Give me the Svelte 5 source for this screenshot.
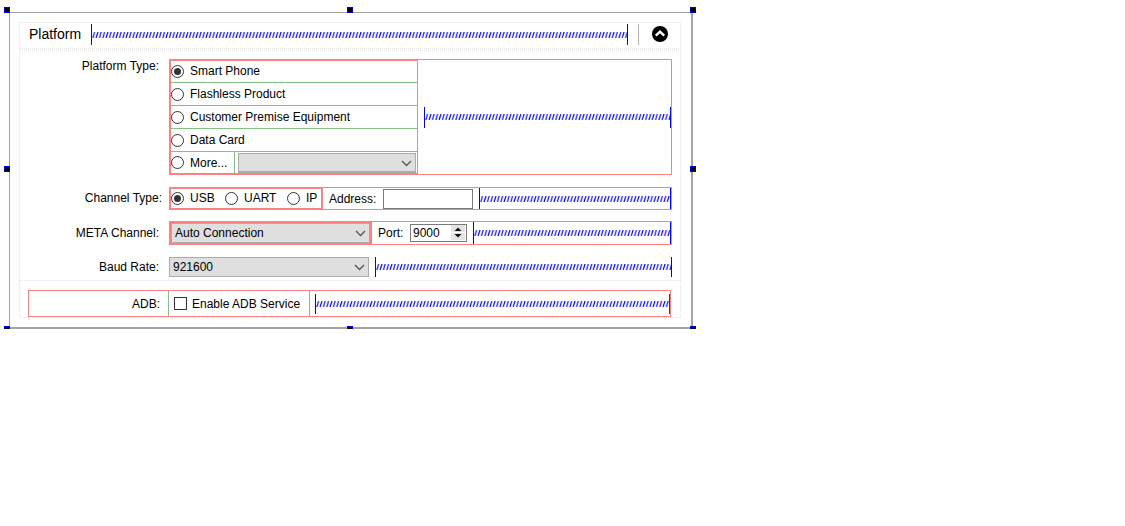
<script>
  const platforms = ['Flashless Product', 'Customer Premise Equipment', 'Data Card'];
  const handles = ['tl', 'tc', 'tr', 'ml', 'mr', 'bl', 'bc', 'br'];
</script>

{#snippet spacer(cls = '')}
  <div class="spacer {cls}">
    <svg class="zig" height="6" width="100%">
      <defs>
        <pattern id="zig-{cls}" width="3.33" height="6" patternUnits="userSpaceOnUse">
          <path d="M.8 6L2.6 0" stroke="#0000ff" stroke-width="1.15" fill="none"/>
        </pattern>
      </defs>
      <rect width="100%" height="6" fill="url(#zig-{cls})"/>
    </svg>
  </div>
{/snippet}

{#snippet radio(on = false)}
  <span class="radio" class:on></span>
{/snippet}

{#snippet chevron()}
  <svg class="chev" width="11" height="7" viewBox="0 0 11 7"><path d="M1 1l4.5 4.5L10 1" fill="none" stroke="#555" stroke-width="1.3"/></svg>
{/snippet}

<div class="form">
  {#each handles as h}<span class="handle {h}"></span>{/each}

  <div class="head">
    <span class="title">Platform</span>
    {@render spacer('head-sp')}
    <span class="vline"></span>
    <span class="toggle">
      <svg width="16" height="16" viewBox="0 0 16 16"><circle cx="8" cy="8" r="8" fill="#000"/><path d="M3.8 9.6L8 5.6l4.2 4" fill="none" stroke="#fff" stroke-width="2.4"/></svg>
    </span>
  </div>

  <div class="body">
    <div class="row r-type">
      <div class="label top">Platform Type:</div>
      <div class="types">
        <div class="opt first">{@render radio(true)}Smart Phone</div>
        {#each platforms as p}
          <div class="opt">{@render radio()}{p}</div>
        {/each}
        <div class="opt last">
          <div class="more">{@render radio()}More...</div>
          <div class="combo more-combo">{@render chevron()}</div>
        </div>
      </div>
      <div class="type-rest">{@render spacer('type-sp')}</div>
    </div>

    <div class="row r-chan">
      <div class="label">Channel Type:</div>
      <div class="chan">
        <span class="ch c1">{@render radio(true)}USB</span>
        <span class="ch c2">{@render radio()}UART</span>
        <span class="ch c3">{@render radio()}IP</span>
      </div>
      <div class="rest">
        <span class="addr">Address:</span>
        <span class="input"></span>
        {@render spacer('chan-sp')}
      </div>
    </div>

    <div class="row r-meta">
      <div class="label">META Channel:</div>
      <div class="meta">
        <div class="combo meta-combo">Auto Connection{@render chevron()}</div>
      </div>
      <div class="rest">
        <span class="port">Port:</span>
        <span class="spin">9000
          <span class="arrows">
            <svg width="14" height="15" viewBox="0 0 14 15"><rect width="14" height="15" fill="#e4e4e4"/><path d="M0 7.500h14" stroke="#fff"/><path d="M3.500 6L7 2.500 10.500 6zM3.500 9h7L7 12.500z" fill="#111"/></svg>
          </span>
        </span>
        {@render spacer('meta-sp')}
      </div>
    </div>

    <div class="row r-baud">
      <div class="label">Baud Rate:</div>
      <div class="combo baud-combo">921600{@render chevron()}</div>
      {@render spacer('baud-sp')}
    </div>
  </div>

  <div class="adbwrap">
    <div class="adb">
      <div class="adb-label">ADB:</div>
      <div class="adb-check"><span class="check"></span>Enable ADB Service</div>
      {@render spacer('adb-sp')}
    </div>
  </div>
</div>

<style>
  :global(body) {
    margin: 0;
    background: #fff;
  }

  .form {
    position: relative;
    box-sizing: border-box;
    width: 684px;
    height: 317px;
    margin: 12px 0 0 9px;
    padding: 9px 10px 0 9px;
    border-style: solid;
    border-color: #a4a4a4;
    border-width: 1px 2px 2px 1px;
    font: 12px/14px "Liberation Sans", Arial, sans-serif;
    color: #000;
  }

  .handle {
    position: absolute;
    box-sizing: border-box;
    width: 6px;
    height: 6px;
    background: #000;
    border: 1px solid #0000c8;
  }
  .tl, .tc, .tr { top: -6px; }
  .ml, .mr { top: 153px; }
  .bl, .bc, .br { top: 313px; }
  .tl, .ml, .bl { left: -6px; }
  .tc, .bc { left: 337px; }
  .tr, .mr, .br { left: 680px; }

  .head {
    box-sizing: border-box;
    height: 27px;
    display: flex;
    align-items: center;
    border: 1px dotted #e4e4e4;
    padding: 0 0 2px 9px;
  }
  .title {
    width: 62px;
    margin-bottom: 2px;
    font-size: 14px;
  }
  .spacer.head-sp {
    width: 537px;
    flex: none;
  }
  .vline {
    width: 1px;
    height: 21px;
    margin-left: 10px;
    background: #b4b4b4;
  }
  .toggle {
    display: flex;
    margin: 0 0 1px 13px;
  }

  .spacer {
    flex: 1;
    height: 21px;
    box-sizing: border-box;
    border-left: 1px solid #0000ff;
    border-right: 1px solid #0000ff;
    display: flex;
    align-items: center;
    min-width: 0;
  }
  .zig {
    flex: 1;
    min-width: 0;
    display: block;
  }
  .spacer.chan-sp, .spacer.meta-sp {
    height: 100%;
    align-self: stretch;
  }
  .spacer.baud-sp, .spacer.adb-sp {
    height: 20px;
  }

  .body {
    box-sizing: border-box;
    height: 231px;
    margin-top: 1px;
    border: 1px dotted #e4e4e4;
    padding-top: 8px;
  }
  .row {
    display: flex;
    align-items: stretch;
  }
  .label {
    box-sizing: border-box;
    width: 139px;
    flex: none;
    text-align: right;
    align-self: center;
    padding-bottom: 1px;
  }
  .label.top {
    align-self: flex-start;
    padding-bottom: 0;
  }

  .r-type { height: 116px; }
  .r-chan { height: 23px; margin-top: 12px; padding-right: 8px; }
  .r-meta { height: 24px; margin-top: 11px; padding-right: 8px; }
  .r-baud { height: 20px; margin-top: 12px; padding-right: 8px; align-items: center; }

  .r-type .label, .r-meta .label, .r-baud .label { margin-right: 10px; }
  .r-chan .label { width: 142px; margin-right: 7px; }

  .types {
    box-sizing: border-box;
    width: 249px;
    flex: none;
    border: 2px solid #ff8080;
    border-right: 0;
    display: flex;
    flex-direction: column;
  }
  .opt {
    box-sizing: border-box;
    flex: none;
    height: 23px;
    display: flex;
    align-items: center;
    gap: 6px;
    border-bottom: 1px solid #80c080;
  }
  .opt.first { height: 22px; padding-bottom: 1px; }
  .opt.last {
    height: 21px;
    border-bottom: 0;
    gap: 0;
  }
  .more {
    box-sizing: border-box;
    display: flex;
    align-items: center;
    gap: 6px;
    width: 64px;
    height: 100%;
    border-right: 1px solid #80c080;
    flex: none;
  }
  .type-rest {
    box-sizing: border-box;
    width: 255px;
    margin-left: -1px;
    border: 1px solid #ff8080;
    display: flex;
    align-items: center;
    padding: 0 0 0 6px;
  }

  .radio {
    box-sizing: border-box;
    width: 13px;
    height: 13px;
    flex: none;
    position: relative;
    border: 1px solid #333;
    border-radius: 50%;
    background: #fff;
  }
  .radio.on::after {
    content: "";
    position: absolute;
    inset: 2px;
    border-radius: 50%;
    background: #333;
  }

  .combo {
    position: relative;
    box-sizing: border-box;
    display: flex;
    align-items: center;
    background: #dfdfdf;
    border: 1px solid #acacac;
  }
  .chev {
    position: absolute;
    right: 3px;
    top: 50%;
    margin-top: -3px;
  }
  .more-combo {
    flex: 1;
    height: 20px;
    margin: 1px 2px 0 3px;
    border-bottom-width: 2px;
  }
  .chan {
    box-sizing: border-box;
    width: 154px;
    flex: none;
    border: 2px solid #ff8080;
    display: flex;
    align-items: center;
    padding-bottom: 1px;
  }
  .ch {
    display: flex;
    align-items: center;
    gap: 6px;
  }
  .c1 { width: 54px; }
  .c2 { width: 62px; }
  .rest {
    flex: 1;
    min-width: 0;
    display: flex;
    align-items: center;
    border-style: solid;
    border-color: #ff8080;
    border-width: 1px 1px 1px 0;
    padding-left: 6px;
  }
  .addr { width: 54px; flex: none; }
  .input {
    box-sizing: border-box;
    width: 90px;
    height: 20px;
    margin-right: 6px;
    flex: none;
    border: 1px solid #7a7a7a;
    background: #fff;
  }
  .meta {
    box-sizing: border-box;
    width: 203px;
    flex: none;
    border: 2px solid #ff8080;
    display: flex;
  }
  .meta-combo {
    flex: 1;
    padding-left: 3px;
    border-color: #acacac;
  }
  .port { width: 32px; flex: none; }
  .spin {
    box-sizing: border-box;
    position: relative;
    width: 57px;
    height: 18px;
    margin-right: 6px;
    flex: none;
    display: flex;
    align-items: center;
    padding-left: 2px;
    border: 1px solid #7a7a7a;
  }
  .arrows {
    position: absolute;
    right: 1px;
    top: 0;
    display: flex;
  }
  .baud-combo {
    width: 200px;
    height: 20px;
    flex: none;
    margin-right: 6px;
    padding-left: 3px;
  }

  .adbwrap {
    box-sizing: border-box;
    height: 37px;
    border: 1px dotted #e4e4e4;
    border-top: 0;
    padding: 9px 9px 0 8px;
  }
  .adb {
    box-sizing: border-box;
    height: 27px;
    display: flex;
    align-items: center;
    border: 1px solid #ff8080;
  }
  .adb-label {
    box-sizing: border-box;
    width: 140px;
    height: 100%;
    flex: none;
    display: flex;
    align-items: center;
    justify-content: flex-end;
    padding-right: 8px;
    border-right: 1px solid #80c080;
  }
  .adb-check {
    box-sizing: border-box;
    width: 141px;
    height: 100%;
    flex: none;
    display: flex;
    align-items: center;
    gap: 5px;
    padding-left: 5px;
    border-right: 1px solid #80c080;
  }
  .check {
    box-sizing: border-box;
    width: 13px;
    height: 13px;
    border: 1px solid #333;
    background: #fff;
  }
  .spacer.adb-sp {
    margin-left: 5px;
    border-right-color: #a00060;
  }
</style>
